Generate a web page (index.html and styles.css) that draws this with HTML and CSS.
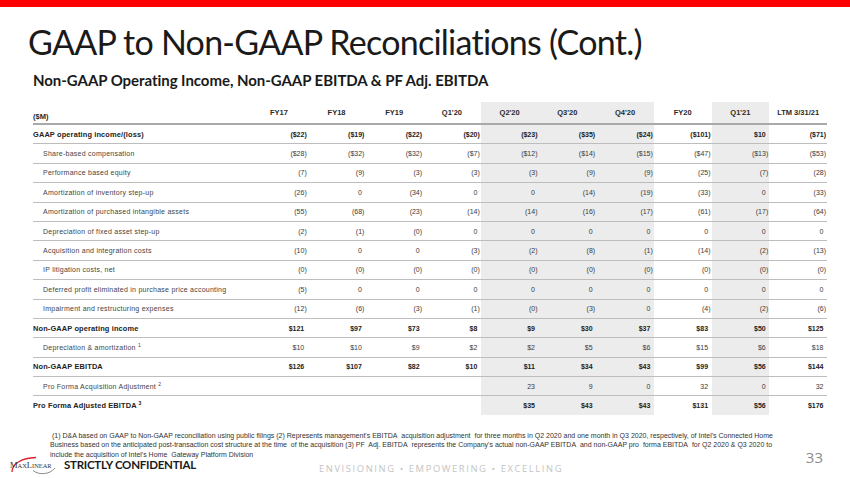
FILE: index.html
```html
<!DOCTYPE html>
<html>
<head>
<meta charset="utf-8">
<link rel="stylesheet" href="styles.css">
</head>
<body>
<div class="slide">
  <div class="topbar"></div>
  <h1 class="title">GAAP to Non-GAAP Reconciliations (Cont.)</h1>
  <h2 class="subtitle">Non-GAAP Operating Income, Non-GAAP EBITDA &amp; PF Adj. EBITDA</h2>
  <table class="recon">
    <colgroup>
      <col class="c-label"><col class="c-num"><col class="c-num"><col class="c-num"><col class="c-num"><col class="c-num"><col class="c-num"><col class="c-num"><col class="c-num"><col class="c-num"><col class="c-num">
    </colgroup>
    <thead>
      <tr>
        <th class="unit">($M)</th>
        <th>FY17</th><th>FY18</th><th>FY19</th><th>Q1'20</th>
        <th class="s">Q2'20</th><th class="s">Q3'20</th><th class="s">Q4'20</th>
        <th>FY20</th><th class="s">Q1'21</th><th>LTM 3/31/21</th>
      </tr>
    </thead>
    <tbody>
      <tr class="b">
        <td class="lbl">GAAP operating income/(loss)</td>
        <td>($22)</td><td>($19)</td><td>($22)</td><td>($20)</td>
        <td class="s">($23)</td><td class="s">($35)</td><td class="s">($24)</td>
        <td>($101)</td><td class="s p">$10</td><td>($71)</td>
      </tr>
      <tr>
        <td class="lbl in">Share-based compensation</td>
        <td>($28)</td><td>($32)</td><td>($32)</td><td>($7)</td>
        <td class="s">($12)</td><td class="s">($14)</td><td class="s">($15)</td>
        <td>($47)</td><td class="s">($13)</td><td>($53)</td>
      </tr>
      <tr>
        <td class="lbl in">Performance based equity</td>
        <td>(7)</td><td>(9)</td><td>(3)</td><td>(3)</td>
        <td class="s">(3)</td><td class="s">(9)</td><td class="s">(9)</td>
        <td>(25)</td><td class="s">(7)</td><td>(28)</td>
      </tr>
      <tr>
        <td class="lbl in">Amortization of inventory step-up</td>
        <td>(26)</td><td class="p">0</td><td>(34)</td><td class="p">0</td>
        <td class="s p">0</td><td class="s">(14)</td><td class="s">(19)</td>
        <td>(33)</td><td class="s p">0</td><td>(33)</td>
      </tr>
      <tr>
        <td class="lbl in">Amortization of purchased intangible assets</td>
        <td>(55)</td><td>(68)</td><td>(23)</td><td>(14)</td>
        <td class="s">(14)</td><td class="s">(16)</td><td class="s">(17)</td>
        <td>(61)</td><td class="s">(17)</td><td>(64)</td>
      </tr>
      <tr>
        <td class="lbl in">Depreciation of fixed asset step-up</td>
        <td>(2)</td><td>(1)</td><td>(0)</td><td class="p">0</td>
        <td class="s p">0</td><td class="s p">0</td><td class="s p">0</td>
        <td class="p">0</td><td class="s p">0</td><td class="p">0</td>
      </tr>
      <tr>
        <td class="lbl in">Acquisition and integration costs</td>
        <td>(10)</td><td class="p">0</td><td class="p">0</td><td>(3)</td>
        <td class="s">(2)</td><td class="s">(8)</td><td class="s">(1)</td>
        <td>(14)</td><td class="s">(2)</td><td>(13)</td>
      </tr>
      <tr>
        <td class="lbl in">IP litigation costs, net</td>
        <td>(0)</td><td>(0)</td><td>(0)</td><td>(0)</td>
        <td class="s">(0)</td><td class="s">(0)</td><td class="s">(0)</td>
        <td>(0)</td><td class="s">(0)</td><td>(0)</td>
      </tr>
      <tr>
        <td class="lbl in">Deferred profit eliminated in purchase price accounting</td>
        <td>(5)</td><td class="p">0</td><td class="p">0</td><td class="p">0</td>
        <td class="s p">0</td><td class="s p">0</td><td class="s p">0</td>
        <td class="p">0</td><td class="s p">0</td><td class="p">0</td>
      </tr>
      <tr>
        <td class="lbl in">Impairment and restructuring expenses</td>
        <td>(12)</td><td>(6)</td><td>(3)</td><td>(1)</td>
        <td class="s">(0)</td><td class="s">(3)</td><td class="s p">0</td>
        <td>(4)</td><td class="s">(2)</td><td>(6)</td>
      </tr>
      <tr class="b">
        <td class="lbl">Non-GAAP operating income</td>
        <td class="p">$121</td><td class="p">$97</td><td class="p">$73</td><td class="p">$8</td>
        <td class="s p">$9</td><td class="s p">$30</td><td class="s p">$37</td>
        <td class="p">$83</td><td class="s p">$50</td><td class="p">$125</td>
      </tr>
      <tr>
        <td class="lbl in">Depreciation &amp; amortization <sup>1</sup></td>
        <td class="p">$10</td><td class="p">$10</td><td class="p">$9</td><td class="p">$2</td>
        <td class="s p">$2</td><td class="s p">$5</td><td class="s p">$6</td>
        <td class="p">$15</td><td class="s p">$6</td><td class="p">$18</td>
      </tr>
      <tr class="b">
        <td class="lbl">Non-GAAP EBITDA</td>
        <td class="p">$126</td><td class="p">$107</td><td class="p">$82</td><td class="p">$10</td>
        <td class="s p">$11</td><td class="s p">$34</td><td class="s p">$43</td>
        <td class="p">$99</td><td class="s p">$56</td><td class="p">$144</td>
      </tr>
      <tr>
        <td class="lbl in">Pro Forma Acquisition Adjustment <sup>2</sup></td>
        <td></td><td></td><td></td><td></td>
        <td class="s p">23</td><td class="s p">9</td><td class="s p">0</td>
        <td class="p">32</td><td class="s p">0</td><td class="p">32</td>
      </tr>
      <tr class="b last">
        <td class="lbl">Pro Forma Adjusted EBITDA <sup>3</sup></td>
        <td></td><td></td><td></td><td></td>
        <td class="s p">$35</td><td class="s p">$43</td><td class="s p">$43</td>
        <td class="p">$131</td><td class="s p">$56</td><td class="p">$176</td>
      </tr>
    </tbody>
  </table>
  <p class="notes"><span class="first">(1) D&amp;A based on GAAP to Non-GAAP reconciliation using public filings (2) Represents management's EBITDA&nbsp; acquisition adjustment&nbsp; for three months in Q2 2020 and one month in Q3 2020, respectively, of Intel's Connected Home</span><br>Business based on the anticipated post-transaction cost structure at the time&nbsp; of the acquisition (3) PF&nbsp; Adj. EBITDA&nbsp; represents the Company's actual non-GAAP EBITDA&nbsp; and non-GAAP pro&nbsp; forma EBITDA&nbsp; for Q2 2020 &amp; Q3 2020 to<br>include the acquisition of Intel's Home&nbsp; Gateway Platform Division</p>
  <footer class="footer">
    <svg class="logo" viewBox="0 0 56 22" width="56" height="22">
      <path d="M4 19 C 4 11, 13 5, 28 4.5" fill="none" stroke="#d8232a" stroke-width="1.3"/>
      <path d="M25 17.5 C 31 22.5, 42 21.5, 47 15" fill="none" stroke="#8a8a8a" stroke-width="1"/>
      <text x="2" y="15" class="logo-text">M<tspan class="sc">AX</tspan>L<tspan class="sc">INEAR</tspan></text>
    </svg>
    <span class="conf">STRICTLY CONFIDENTIAL</span>
    <span class="tagline">ENVISIONING • EMPOWERING • EXCELLING</span>
    <span class="pageno">33</span>
  </footer>
</div>
</body>
</html>
```

FILE: styles.css
```css
html, body {
  margin: 0;
  padding: 0;
  background: #ffffff;
}

.slide {
  width: 850px;
  height: 478px;
  overflow: hidden;
  display: flex;
  flex-direction: column;
  background: #ffffff;
}

.topbar {
  height: 7px;
  background: #ff0000;
  flex: none;
}

.title {
  margin: 13px 0 0 28px;
  font-family: Lato, "Open Sans", sans-serif;
  font-weight: 400;
  font-size: 34px;
  line-height: 44px;
  color: #1a1a1a;
  letter-spacing: -0.75px;
}

.subtitle {
  margin: 7px 0 0 33px;
  font-family: Lato, "Open Sans", sans-serif;
  font-weight: 700;
  font-size: 15px;
  line-height: 19px;
  color: #1a1a1a;
  letter-spacing: -0.05px;
}

.recon {
  margin: 12px 0 0 33px;
  border-collapse: collapse;
  table-layout: fixed;
  width: 794px;
  font-family: "Liberation Sans", Arial, sans-serif;
  font-size: 7px;
  color: #3a3a3a;
}

.c-label { width: 217px; }
.c-num { width: 57.7px; }

.recon th {
  height: 19px;
  padding: 0 1px;
  font-size: 7.5px;
  font-weight: 700;
  text-align: center;
  vertical-align: middle;
  color: #2a2a2a;
  border-bottom: 2px solid #a9a9a9;
}

.recon th.unit {
  text-align: left;
  vertical-align: bottom;
  padding: 0 0 2px 0;
}

.recon td {
  height: 18.4px;
  padding: 0 1px 0 0;
  text-align: right;
  vertical-align: middle;
  border-bottom: 1px solid #bdbdbd;
  white-space: nowrap;
}

.recon td.p {
  padding-right: 3.5px;
}

.recon .s {
  background: #ececec;
}

.recon td.lbl {
  text-align: left;
  padding: 0;
  letter-spacing: 0.25px;
  color: #444444;
}

.recon td.lbl.in {
  padding-left: 10px;
}

.recon tr.b td {
  font-weight: 700;
  color: #222222;
}

.recon tr.b td.lbl {
  font-size: 7.4px;
  letter-spacing: 0.15px;
}

.recon tr.last td {
  border-bottom: none;
}

.recon sup {
  font-size: 5px;
  line-height: 0;
  vertical-align: 3px;
}

.notes {
  margin: 16px 0 0 50px;
  font-family: "Liberation Sans", Arial, sans-serif;
  font-size: 7px;
  line-height: 9.4px;
  color: #333333;
  letter-spacing: 0;
  white-space: nowrap;
}

.notes .first {
  padding-left: 2px;
}

.footer {
  margin-top: -6px;
  display: flex;
  align-items: flex-end;
  height: 22px;
}

.logo {
  margin-left: 8px;
  flex: none;
}

.logo-text {
  font-family: "Liberation Serif", serif;
  font-size: 8.5px;
  fill: #333333;
}

.logo-text .sc {
  font-size: 6.4px;
}

.conf {
  margin-left: 0;
  margin-bottom: 4px;
  font-family: Lato, "Open Sans", sans-serif;
  font-weight: 700;
  font-size: 11.5px;
  line-height: 13px;
  color: #1a1a1a;
  letter-spacing: -0.25px;
}

.tagline {
  margin-left: 123px;
  margin-bottom: 0;
  font-family: "Open Sans", Lato, sans-serif;
  font-size: 9.4px;
  line-height: 12px;
  letter-spacing: 1.6px;
  color: #c4c4c4;
}

.pageno {
  margin-left: auto;
  margin-right: 27px;
  align-self: flex-start;
  margin-top: -4px;
  font-family: "Open Sans", Lato, sans-serif;
  font-size: 15px;
  line-height: 16px;
  color: #8c8c8c;
}
```
